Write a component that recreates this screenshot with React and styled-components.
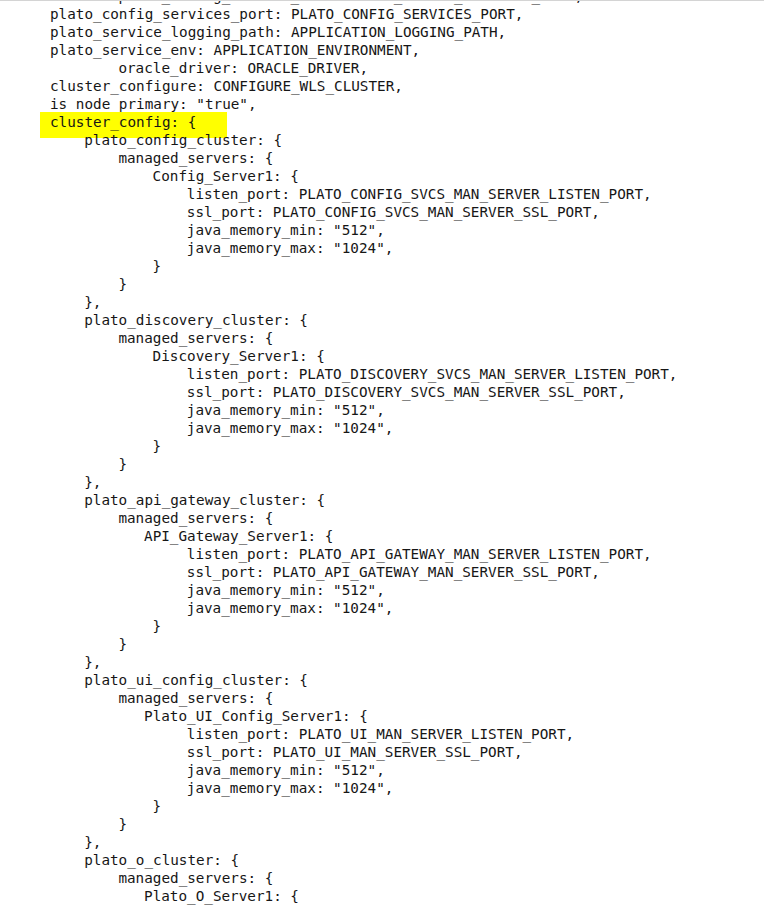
import React from "react";
import styled, { createGlobalStyle } from "styled-components";

const Global = createGlobalStyle`
  html, body {
    margin: 0;
    padding: 0;
    background: #ffffff;
  }
`;

const Page = styled.div`
  width: 764px;
  height: 906px;
  box-sizing: border-box;
  border-top: 1px solid #d4d4d4;
  overflow: hidden;
  background: #ffffff;
`;

const Code = styled.div`
  margin-top: -14px;
  padding-left: 50px;
  display: flex;
  flex-direction: column;
  font-family: "DejaVu Sans Mono", "Liberation Mono", monospace;
  font-size: 14.3px;
  line-height: 18px;
  color: #161616;
`;

const Line = styled.div`
  height: 18px;
  white-space: pre;
  padding-left: ${(p) => p.$indent * 8.55}px;
`;

const Mark = styled.span`
  background: #ffff00;
  padding: 2px 31px 8px 10px;
  margin-left: -10px;
`;

const server = (cluster, serverName, serverIndent, prefix) => [
  [4, `${cluster}: {`],
  [8, "managed_servers: {"],
  [serverIndent, `${serverName}: {`],
  [16, `listen_port: ${prefix}_MAN_SERVER_LISTEN_PORT,`],
  [16, `ssl_port: ${prefix}_MAN_SERVER_SSL_PORT,`],
  [16, 'java_memory_min: "512",'],
  [16, 'java_memory_max: "1024",'],
  [12, "}"],
  [8, "}"],
  [4, "},"],
];

const lines = [
  [8, "plato_config_service_host: PLATO_CONFIG_SERVICES_HOST,"],
  [0, "plato_config_services_port: PLATO_CONFIG_SERVICES_PORT,"],
  [0, "plato_service_logging_path: APPLICATION_LOGGING_PATH,"],
  [0, "plato_service_env: APPLICATION_ENVIRONMENT,"],
  [8, "oracle_driver: ORACLE_DRIVER,"],
  [0, "cluster_configure: CONFIGURE_WLS_CLUSTER,"],
  [0, 'is_node_primary: "true",'],
  [0, "cluster_config: {", true],
  ...server("plato_config_cluster", "Config_Server1", 12, "PLATO_CONFIG_SVCS"),
  ...server("plato_discovery_cluster", "Discovery_Server1", 12, "PLATO_DISCOVERY_SVCS"),
  ...server("plato_api_gateway_cluster", "API_Gateway_Server1", 11, "PLATO_API_GATEWAY"),
  ...server("plato_ui_config_cluster", "Plato_UI_Config_Server1", 11, "PLATO_UI"),
  [4, "plato_o_cluster: {"],
  [8, "managed_servers: {"],
  [11, "Plato_O_Server1: {"],
];

export default function App() {
  return (
    <>
      <Global />
      <Page>
        <Code>
          {lines.map(([indent, text, mark], i) => (
            <Line key={i} $indent={indent}>
              {mark ? <Mark>{text}</Mark> : text}
            </Line>
          ))}
        </Code>
      </Page>
    </>
  );
}
